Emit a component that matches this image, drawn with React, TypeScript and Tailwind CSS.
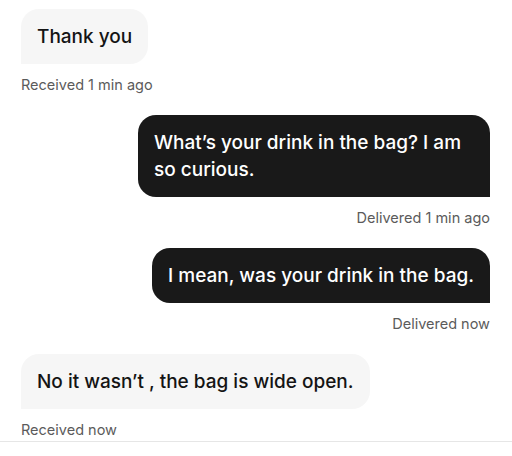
import React from "react";

type Message = {
  id: number;
  text: string;
  mine: boolean;
  status: string;
};

const messages: Message[] = [
  { id: 1, text: "Thank you", mine: false, status: "Received 1 min ago" },
  {
    id: 2,
    text: "What’s your drink in the bag? I am so curious.",
    mine: true,
    status: "Delivered 1 min ago",
  },
  { id: 3, text: "I mean, was your drink in the bag.", mine: true, status: "Delivered now" },
  { id: 4, text: "No it wasn’t , the bag is wide open.", mine: false, status: "Received now" },
];

const Bubble = ({ message }: { message: Message }) => {
  return (
    <div className={`flex flex-col ${message.mine ? "items-end" : "items-start"}`}>
      <div
        className={`max-w-[352px] px-4 py-[14px] text-[19px] leading-[27px] font-medium ${
          message.mine
            ? "bg-[#191919] text-white rounded-[18px] rounded-br-none"
            : "bg-[#f6f6f6] text-[#141414] rounded-[18px] rounded-bl-none"
        }`}
      >
        {message.text}
      </div>
      <span className="mt-[11px] text-[14.5px] leading-5 text-[#5b5b5b]">{message.status}</span>
    </div>
  );
};

export default function App() {
  return (
    <div
      className="w-[512px] h-[456px] bg-white"
      style={{ fontFamily: "Inter, 'Noto Sans', sans-serif" }}
    >
      <div className="flex flex-col gap-5 pt-[9px] pl-[21px] pr-[22px] pb-px border-b border-[#e6e6e6]">
        {messages.map((m) => (
          <Bubble key={m.id} message={m} />
        ))}
      </div>
    </div>
  );
}
